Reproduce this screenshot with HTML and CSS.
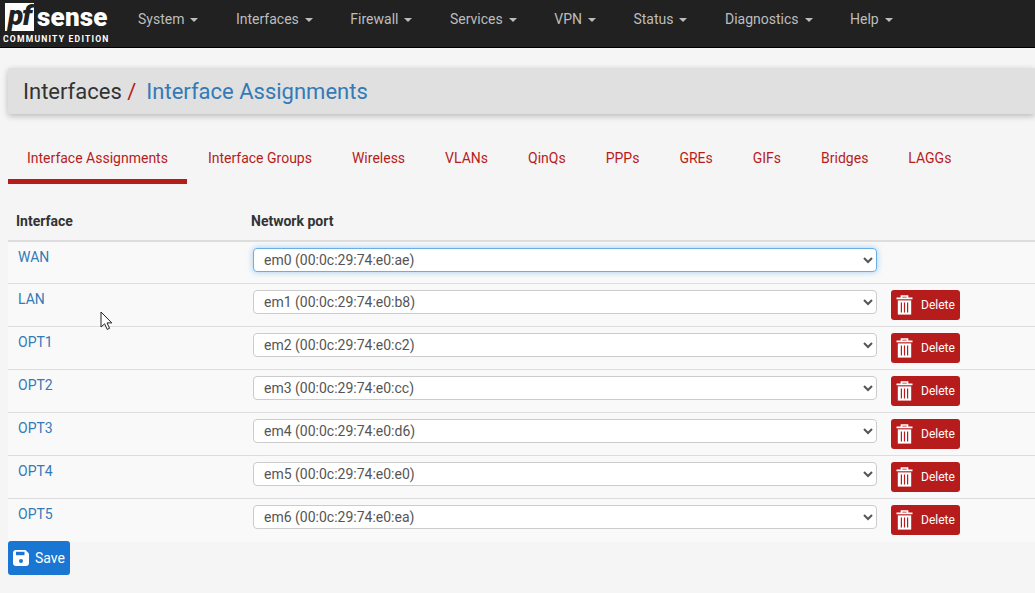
FILE: index.html
```html
<!DOCTYPE html>
<html lang="en">
<head>
<meta charset="utf-8">
<title>Interface Assignments</title>
<link rel="stylesheet" href="styles.css">
</head>
<body>
<nav class="navbar">
  <a class="brand">
    <span class="logo-row"><span class="logo-pf">pf</span><span class="logo-sense">sense</span></span>
    <span class="logo-ed">COMMUNITY EDITION</span>
  </a>
  <ul class="menu">
    <li>System<i class="caret"></i></li>
    <li>Interfaces<i class="caret"></i></li>
    <li>Firewall<i class="caret"></i></li>
    <li>Services<i class="caret"></i></li>
    <li>VPN<i class="caret"></i></li>
    <li>Status<i class="caret"></i></li>
    <li>Diagnostics<i class="caret"></i></li>
    <li>Help<i class="caret"></i></li>
  </ul>
</nav>
<main class="content">
  <header class="crumbs">
    <span class="crumb-root">Interfaces</span><span class="crumb-sep">/</span><a class="crumb-link">Interface Assignments</a>
  </header>
  <ul class="tabs">
    <li class="tab active">Interface Assignments</li>
    <li class="tab">Interface Groups</li>
    <li class="tab">Wireless</li>
    <li class="tab">VLANs</li>
    <li class="tab">QinQs</li>
    <li class="tab">PPPs</li>
    <li class="tab">GREs</li>
    <li class="tab">GIFs</li>
    <li class="tab">Bridges</li>
    <li class="tab">LAGGs</li>
  </ul>
  <div class="table">
    <div class="thead"><span class="col-a">Interface</span><span class="col-b">Network port</span></div>
    <div class="row first">
      <a class="name">WAN</a>
      <select class="port focus"><option>em0 (00:0c:29:74:e0:ae)</option></select>
    </div>
    <div class="row">
      <a class="name">LAN</a>
      <select class="port"><option>em1 (00:0c:29:74:e0:b8)</option></select>
      <button class="del"><svg class="trash" viewBox="0 0 17 20"><path d="M0.5 3.4h16M5.5 3V1h6v2" fill="none" stroke="#fff" stroke-width="1.7"/><path d="M1.8 5.4h13.4v14.2H1.8z" fill="#fff"/><path d="M5.4 7.5v10M8.5 7.5v10M11.6 7.5v10" stroke="#b71c1c" stroke-width="1.2"/></svg>Delete</button>
    </div>
    <div class="row">
      <a class="name">OPT1</a>
      <select class="port"><option>em2 (00:0c:29:74:e0:c2)</option></select>
      <button class="del"><svg class="trash" viewBox="0 0 17 20"><path d="M0.5 3.4h16M5.5 3V1h6v2" fill="none" stroke="#fff" stroke-width="1.7"/><path d="M1.8 5.4h13.4v14.2H1.8z" fill="#fff"/><path d="M5.4 7.5v10M8.5 7.5v10M11.6 7.5v10" stroke="#b71c1c" stroke-width="1.2"/></svg>Delete</button>
    </div>
    <div class="row">
      <a class="name">OPT2</a>
      <select class="port"><option>em3 (00:0c:29:74:e0:cc)</option></select>
      <button class="del"><svg class="trash" viewBox="0 0 17 20"><path d="M0.5 3.4h16M5.5 3V1h6v2" fill="none" stroke="#fff" stroke-width="1.7"/><path d="M1.8 5.4h13.4v14.2H1.8z" fill="#fff"/><path d="M5.4 7.5v10M8.5 7.5v10M11.6 7.5v10" stroke="#b71c1c" stroke-width="1.2"/></svg>Delete</button>
    </div>
    <div class="row">
      <a class="name">OPT3</a>
      <select class="port"><option>em4 (00:0c:29:74:e0:d6)</option></select>
      <button class="del"><svg class="trash" viewBox="0 0 17 20"><path d="M0.5 3.4h16M5.5 3V1h6v2" fill="none" stroke="#fff" stroke-width="1.7"/><path d="M1.8 5.4h13.4v14.2H1.8z" fill="#fff"/><path d="M5.4 7.5v10M8.5 7.5v10M11.6 7.5v10" stroke="#b71c1c" stroke-width="1.2"/></svg>Delete</button>
    </div>
    <div class="row">
      <a class="name">OPT4</a>
      <select class="port"><option>em5 (00:0c:29:74:e0:e0)</option></select>
      <button class="del"><svg class="trash" viewBox="0 0 17 20"><path d="M0.5 3.4h16M5.5 3V1h6v2" fill="none" stroke="#fff" stroke-width="1.7"/><path d="M1.8 5.4h13.4v14.2H1.8z" fill="#fff"/><path d="M5.4 7.5v10M8.5 7.5v10M11.6 7.5v10" stroke="#b71c1c" stroke-width="1.2"/></svg>Delete</button>
    </div>
    <div class="row">
      <a class="name">OPT5</a>
      <select class="port"><option>em6 (00:0c:29:74:e0:ea)</option></select>
      <button class="del"><svg class="trash" viewBox="0 0 17 20"><path d="M0.5 3.4h16M5.5 3V1h6v2" fill="none" stroke="#fff" stroke-width="1.7"/><path d="M1.8 5.4h13.4v14.2H1.8z" fill="#fff"/><path d="M5.4 7.5v10M8.5 7.5v10M11.6 7.5v10" stroke="#b71c1c" stroke-width="1.2"/></svg>Delete</button>
    </div>
  </div>
  <button class="save"><svg class="disk" viewBox="0 0 16 16"><path d="M3 0h9.5L16 3.5V13a3 3 0 0 1-3 3H3a3 3 0 0 1-3-3V3a3 3 0 0 1 3-3z" fill="#fff"/><path d="M3 1.8h8.5v3.4H3z" fill="#1976d2"/><circle cx="8" cy="11" r="2" fill="#1976d2"/></svg>Save</button>
</main>
<svg class="cursor" viewBox="0 0 13 20"><path d="M1 1v15l3.6-3.2 2.6 5.6 2.4-1.1-2.6-5.4h4.8z" fill="#fff" stroke="#222" stroke-width="1"/></svg>
</body>
</html>
```
FILE: styles.css
```css
* { box-sizing: border-box; }
html, body { margin: 0; height: 100%; overflow: hidden; }
body { background: #f5f5f5; font-family: Roboto, "Liberation Sans", sans-serif; font-size: 14px; color: #212121; }
ul { list-style: none; margin: 0; padding: 0; }

.navbar { height: 48px; background: #212121; border-bottom: 1px solid #000; display: flex; }
.brand { width: 118px; padding: 2px 0 0 3px; display: flex; flex-direction: column; color: #fff; flex: none; }
.logo-row { display: flex; align-items: center; height: 29px; }
.logo-pf { background: #fff; color: #212121; font: italic 900 28px/26px Roboto, sans-serif; width: 29px; height: 28px; margin-left: 2px; text-align: center; letter-spacing: -1px; }
.logo-sense { font: 900 26px/28px Roboto, sans-serif; margin-left: 3px; letter-spacing: 0.2px; }
.logo-ed { font: 700 8.6px/10px Roboto, sans-serif; letter-spacing: 1.2px; margin-top: 3px; white-space: nowrap; }
.menu { display: flex; margin-left: 20px; }
.menu li { color: #bdbdbd; margin-right: 37.5px; line-height: 38px; white-space: nowrap; }
.caret { display: inline-block; margin-left: 6px; vertical-align: middle; border-top: 4px solid #bdbdbd; border-left: 4px solid transparent; border-right: 4px solid transparent; }

.content { padding: 20px 0 0 8px; }
.crumbs { height: 46px; background: #e0e0e0; box-shadow: 0 2px 6px rgba(0,0,0,.25); padding-left: 15px; font-size: 22px; line-height: 47px; border-radius: 2px 0 0 2px; white-space: nowrap; }
.crumb-root { color: #333; }
.crumb-sep { color: #b71c1c; margin: 0 10px 0 5.5px; }
.crumb-link { color: #337ab7; }

.tabs { display: flex; margin-top: 21px; height: 49px; }
.tab { color: #b71c1c; padding: 0 19px; margin-right: 2px; line-height: 46px; white-space: nowrap; }
.tab.active { border-bottom: 5px solid #b71c1c; }

.table { margin-top: 19px; }
.thead { height: 39px; display: flex; align-items: center; font-weight: 700; border-bottom: 2px solid #ddd; color: #333; padding-bottom: 2px; }
.col-a { width: 243px; padding-left: 8px; }
.row { height: 43px; display: flex; background: #f9f9f9; border-bottom: 1px solid #ddd; padding-top: 6px; }
.row.first { height: 42px; }
.row:last-child { border-bottom: 0; }
.name { color: #337ab7; width: 245px; padding-left: 10px; line-height: 18px; flex: none; }
.port { width: 624px; height: 24px; background: #fff; border: 1px solid #ccc; border-radius: 4px; color: #555; font: 14px Roboto, sans-serif; padding: 0 6px; flex: none; }
.port.focus { border-color: #66afe9; box-shadow: 0 0 6px rgba(102,175,233,.6); outline: 0; }
.del { margin-left: 14px; width: 69px; height: 30px; background: #b71c1c; border: 0; border-radius: 3px; color: #fff; font: 12px Roboto, sans-serif; display: flex; align-items: center; padding: 0 0 0 5px; }
.trash { width: 17px; height: 20px; margin-right: 8px; }

.save { display: flex; align-items: center; height: 34px; width: 62px; margin-top: -1px; background: #1976d2; border: 0; border-radius: 3px; color: #fff; font: 14px Roboto, sans-serif; padding: 0 0 0 5px; }
.disk { width: 16px; height: 16px; margin-right: 6px; }
.cursor { position: absolute; left: 100px; top: 311px; width: 13px; height: 20px; }
```
